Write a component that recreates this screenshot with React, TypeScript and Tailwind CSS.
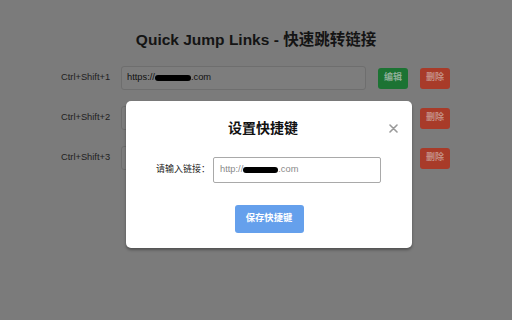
import React from "react";

const FONT = { fontFamily: '"Liberation Sans", Arial, "Noto Sans CJK SC", sans-serif' };

function Blob({ w }: { w: number }) {
  return <span className="inline-block h-[6px] bg-black rounded-full align-middle" style={{ width: w }} />;
}

function Row({ n }: { n: number }) {
  return (
    <div className="flex items-center h-[24px] pl-[61px]">
      <div className="w-[60px] text-[9.3px] text-[#1e1e1e]">Ctrl+Shift+{n}</div>
      <div className="w-[245px] h-[24px] rounded-[3px] border border-[#6e6e6e] bg-[#7d7d7d] flex items-center px-[5px] text-[9.3px] text-[#111]">
        {n === 1 && (
          <>
            <span>https://</span>
            <Blob w={36} />
            <span>.com</span>
          </>
        )}
      </div>
      <button className="ml-[12px] w-[30px] h-[21px] rounded-[3px] bg-[#1c7333] text-[9px] font-bold text-[#8fae98]">编辑</button>
      <button className="ml-[12px] w-[30px] h-[21px] rounded-[3px] bg-[#a83b29] text-[9px] font-bold text-[#c48e84]">删除</button>
    </div>
  );
}

export default function App() {
  return (
    <div className="relative w-[512px] h-[320px] bg-[#7b7b7b] overflow-hidden" style={FONT}>
      <div className="pt-[28px] h-[52px] text-center text-[15.5px] leading-[24px] font-bold text-[#141414]">
        Quick Jump Links - 快速跳转链接
      </div>
      <div className="mt-[14px] flex flex-col gap-[16px]">
        <Row n={1} />
        <Row n={2} />
        <Row n={3} />
      </div>

      <div className="absolute left-[126px] top-[101px] w-[286px] h-[147px] bg-white rounded-[5px] shadow-[0_2px_3px_rgba(0,0,0,0.35)]">
        <div className="pt-[17px] pr-[12px] text-center text-[14px] leading-[20px] font-bold text-[#111]">设置快捷键</div>
        <svg className="absolute left-[263px] top-[23px]" width="9" height="9" viewBox="0 0 9 9">
          <path d="M1 1 L8 8 M8 1 L1 8" stroke="#9a9a9a" strokeWidth="1.6" strokeLinecap="round" />
        </svg>
        <div className="mt-[19px] flex items-center pl-[30px]">
          <span className="w-[57px] whitespace-nowrap text-[9px] text-[#222]">请输入链接：</span>
          <div className="w-[168px] h-[26px] border border-[#a9a9a9] rounded-[2px] flex items-center px-[6px] text-[9.3px] text-[#8a8a8a]">
            <span>http://</span>
            <Blob w={35} />
            <span>.com</span>
          </div>
        </div>
        <div className="mt-[22px] flex justify-center">
          <button className="w-[69px] h-[28px] rounded-[3px] bg-[#65a0ec] text-white text-[9.3px] font-bold">保存快捷键</button>
        </div>
      </div>
    </div>
  );
}
